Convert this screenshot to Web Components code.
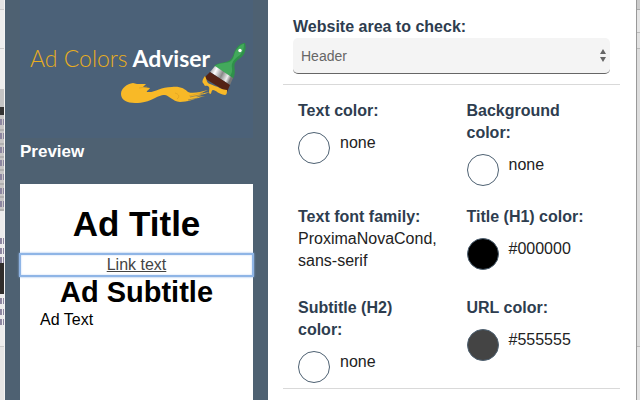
<!DOCTYPE html>
<html lang="en">
<head>
<meta charset="utf-8">
<title>Ad Colors Adviser</title>
<style>
  html, body { height: 100%; }
  body {
    margin: 0;
    overflow: hidden;
    font: 16px/22px "Liberation Sans", Arial, sans-serif;
    color: #222;
  }
</style>
</head>
<body>
<aca-app>
  <aca-sidebar slot="sidebar">
    <aca-logo slot="logo"></aca-logo>
    <aca-preview></aca-preview>
  </aca-sidebar>
  <aca-area-select></aca-area-select>
  <aca-results>
    <aca-color label="Text color:" value="none"></aca-color>
    <aca-color label="Background color:" value="none"></aca-color>
    <aca-font label="Text font family:">ProximaNovaCond, sans-serif</aca-font>
    <aca-color label="Title (H1) color:" value="#000000" fill="#000"></aca-color>
    <aca-color label="Subtitle (H2) color:" value="none"></aca-color>
    <aca-color label="URL color:" value="#555555" fill="#444"></aca-color>
  </aca-results>
</aca-app>

<script>
// Page behind the dialog, sidebar and main column
class App extends HTMLElement {
  constructor() {
    super();
    this.attachShadow({ mode: 'open' });
    this.shadowRoot.innerHTML = `
      <style>
        :host {
          display: grid;
          grid-template-columns: 5px 263fr 368fr 4px;
          height: 100%;
          background: #fff;
        }
        .edge { overflow: hidden; }
        .left {
          border-right: 1px solid #f4f4f4;
          background: linear-gradient(#e4e4e4 9px, #ccc 9px 10px, #eee 10px 48px, #ccc 48px 49px,
            #eee 49px 89px, #c4c4c4 89px 107px, #333 107px 115px, #c9c7c7 115px 211px,
            #ededed 211px 263px, #302d2b 263px 294px, #ededed 294px 346px, #ccc 346px 347px, #e6e6e6 347px);
        }
        .right {
          border-left: 1px solid #999;
          background: linear-gradient(#ccc 9px, #aaa 9px 10px, #e6e6e6 10px 32px, #bbb 32px 33px,
            #e2e2e2 33px 48px, #bbb 48px 49px, #ddd 49px 346px, #bbb 346px 347px, #e4e4e4 347px);
        }
        .left svg { display: block; width: 4px; height: 400px; }
        main { padding: 16px 16px 0 15px; min-width: 0; }
      </style>
      <div class="edge left">
        <svg viewBox="0 0 4 400" fill="none" stroke="#999" aria-hidden="true">
          <path d="M0 130h4M0 144h4M0 157h4M0 170h4M0 184h4M0 197h4M0 210h4"/>
          <path stroke="#8d86a0" stroke-width="6" stroke-dasharray="2 1" d="M0 122h4M0 136h4M0 150h4M0 163h4M0 177h4M0 191h4M0 204h4M0 241h4M0 251h4M0 260h4M0 301h4M0 312h4M0 322h4"/>
        </svg>
      </div>
      <slot name="sidebar"></slot>
      <main><slot></slot></main>
      <div class="edge right"></div>
    `;
  }
}

class Sidebar extends HTMLElement {
  constructor() {
    super();
    this.attachShadow({ mode: 'open' });
    this.shadowRoot.innerHTML = `
      <style>
        :host {
          display: flex;
          flex-direction: column;
          min-width: 0;
          padding: 0 15px;
          background: #4e6172;
        }
        h2 {
          margin: 0;
          padding: 3px 0 21px;
          color: #fff;
          font-size: 17px;
          line-height: 22px;
        }
        ::slotted(aca-preview) { flex: 1; }
      </style>
      <slot name="logo"></slot>
      <h2>Preview</h2>
      <slot></slot>
    `;
  }
}

class Logo extends HTMLElement {
  constructor() {
    super();
    this.attachShadow({ mode: 'open' });
    this.shadowRoot.innerHTML = `
      <style>
        :host {
          display: block;
          position: relative;
          height: 138px;
          background: #4b6178;
        }
        h1 {
          margin: 0;
          padding: 44px 0 0 10px;
          font: 700 23px/28px Lato, "Open Sans", sans-serif;
          color: #fff;
          white-space: nowrap;
        }
        h1 span { font-weight: 300; color: #e8ae20; }
        svg {
          position: absolute;
          top: 0;
          left: 0;
          width: 233px;
          height: 138px;
        }
      </style>
      <h1><span>Ad Colors</span> Adviser</h1>
      <svg viewBox="20 0 233 138" aria-hidden="true">
        <defs>
          <linearGradient id="metal" x1="0" y1="0" x2="1" y2="0.4">
            <stop offset="0" stop-color="#777"/>
            <stop offset="0.3" stop-color="#fff"/>
            <stop offset="0.6" stop-color="#888"/>
            <stop offset="0.85" stop-color="#eee"/>
            <stop offset="1" stop-color="#777"/>
          </linearGradient>
        </defs>
        <path fill="#f8b927" d="M121 94C121 88 127 84 133 83L137 84L146 84L143 87L150 88C149 90 146 91 147 92C155 93 160 87 172 87C180 86 185 89 188 92C193 94 200 92 208 90L199 94L210 92L196 97L205 96C194 99 187 102 180 102C172 101 170 96 165 95C156 95 152 103 135 103C127 103 121 100 121 94Z"/>
        <path fill="none" stroke="#4b6178" stroke-width="0.5" d="M190 97l14-3M188 100l10-2"/>
        <path fill="none" stroke="#d89b20" stroke-width="0.6" d="M139 88c3 0 4-1 8-1M175 93c4 1 5 4 2 6M189 96l14-4"/>
        <path fill="#2f914a" d="M214 66C218 62 226 63 230 60C234 57 233 53 236 49C238 45 242 43 245 43C246 46 246 50 244 54C242 58 237 59 235 63C233 67 237 71 233 79Z"/>
        <path fill="#43a95c" d="M215 66C219 62 227 64 231 61C235 57 233 54 237 49C239 46 242 44 244 44C244 48 243 52 240 55C236 58 233 60 232 64C231 68 234 70 230 76Z"/>
        <circle cx="240" cy="50.500" r="1.700" fill="#fff"/>
        <path fill="url(#metal)" d="M215 66L233 78L230 85L210 72Z"/>
        <path fill="#542315" d="M210 72L230 85L227 92L204 78Z"/>
        <path fill="#f8b927" d="M205 76C203 79 201 82 204 84C204 87 208 85 209 87C210 90 208 92 210 94C212 94 211 90 213 90C216 90 218 94 225 95C227 95 227 92 227 90C222 89 221 89 218 87C214 86 213 85 210 84C206 83 207 79 205 76Z"/>
      </svg>
    `;
  }
}

class Preview extends HTMLElement {
  constructor() {
    super();
    this.attachShadow({ mode: 'open' });
    this.shadowRoot.innerHTML = `
      <style>
        :host {
          display: block;
          padding-top: 20px;
          background: #fff;
          color: #000;
        }
        h1, h2, p { margin: 0; }
        h1, h2 { text-align: center; }
        h1 { padding-bottom: 10px; font-size: 35px; line-height: 40px; }
        h2 { padding-bottom: 1px; font-size: 29px; line-height: 32px; }
        a {
          display: block;
          color: #444;
          text-align: center;
          outline: 2px solid #8fb5e6;
          outline-offset: -1px;
          box-shadow: 0 0 2px 1px #8fb5e6, inset 0 0 2px 1px #b9d2f2;
        }
        p { padding: 0 20px; }
      </style>
      <h1>Ad Title</h1>
      <a href="#">Link text</a>
      <h2>Ad Subtitle</h2>
      <p>Ad Text</p>
    `;
  }
}

class AreaSelect extends HTMLElement {
  constructor() {
    super();
    this.attachShadow({ mode: 'open' });
    this.shadowRoot.innerHTML = `
      <style>
        :host {
          display: block;
          padding: 0 10px 10px;
        }
        label {
          display: block;
          color: #2e3d4f;
          font-weight: bold;
        }
        .field { position: relative; }
        select {
          appearance: none;
          display: block;
          width: 100%;
          height: 36px;
          padding: 0 24px 0 8px;
          border: 0;
          border-bottom: 1px solid #666;
          border-radius: 5px;
          background: #f4f4f4;
          color: #666;
          font: 14px "Liberation Sans", Arial, sans-serif;
        }
        svg {
          position: absolute;
          top: 11px;
          right: 4px;
          width: 6px;
          height: 13px;
          pointer-events: none;
        }
      </style>
      <label for="area">Website area to check:</label>
      <div class="field">
        <select id="area">
          <option>Header</option>
        </select>
        <svg viewBox="0 0 6 13" fill="#666" aria-hidden="true"><path d="M0 5L3 0L6 5ZM0 8H6L3 13Z"/></svg>
      </div>
    `;
  }
}

class Results extends HTMLElement {
  constructor() {
    super();
    this.attachShadow({ mode: 'open' });
    this.shadowRoot.innerHTML = `
      <style>
        :host {
          display: grid;
          grid-template-columns: 1fr 1fr;
          row-gap: 20px;
          padding: 15px 0 5px;
          border: solid #d9d9d9;
          border-width: 1px 0;
        }
        ::slotted(*) { min-width: 0; padding: 0 15px; }
      </style>
      <slot></slot>
    `;
  }
}

class Color extends HTMLElement {
  constructor() {
    super();
    this.attachShadow({ mode: 'open' });
    this.shadowRoot.innerHTML = `
      <style>
        :host { display: block; }
        .label { color: #2e3d4f; font-weight: bold; }
        .value { display: flex; gap: 10px; padding-top: 10px; }
        .swatch {
          box-sizing: border-box;
          width: 32px;
          height: 32px;
          border: 1px solid #4e6172;
          border-radius: 50%;
        }
      </style>
      <div class="label"></div>
      <div class="value"><span class="swatch"></span><span class="text"></span></div>
    `;
  }

  connectedCallback() {
    this.shadowRoot.querySelector('.label').textContent = this.getAttribute('label');
    this.shadowRoot.querySelector('.text').textContent = this.getAttribute('value');
    if (this.hasAttribute('fill')) {
      this.shadowRoot.querySelector('.swatch').style.backgroundColor = this.getAttribute('fill');
    }
  }
}

class Font extends HTMLElement {
  constructor() {
    super();
    this.attachShadow({ mode: 'open' });
    this.shadowRoot.innerHTML = `
      <style>
        :host { display: block; margin-bottom: 5px; }
        .label { color: #2e3d4f; font-weight: bold; }
      </style>
      <div class="label"></div>
      <slot></slot>
    `;
  }

  connectedCallback() {
    this.shadowRoot.querySelector('.label').textContent = this.getAttribute('label');
  }
}

customElements.define('aca-app', App);
customElements.define('aca-sidebar', Sidebar);
customElements.define('aca-logo', Logo);
customElements.define('aca-preview', Preview);
customElements.define('aca-area-select', AreaSelect);
customElements.define('aca-results', Results);
customElements.define('aca-color', Color);
customElements.define('aca-font', Font);
</script>
</body>
</html>
